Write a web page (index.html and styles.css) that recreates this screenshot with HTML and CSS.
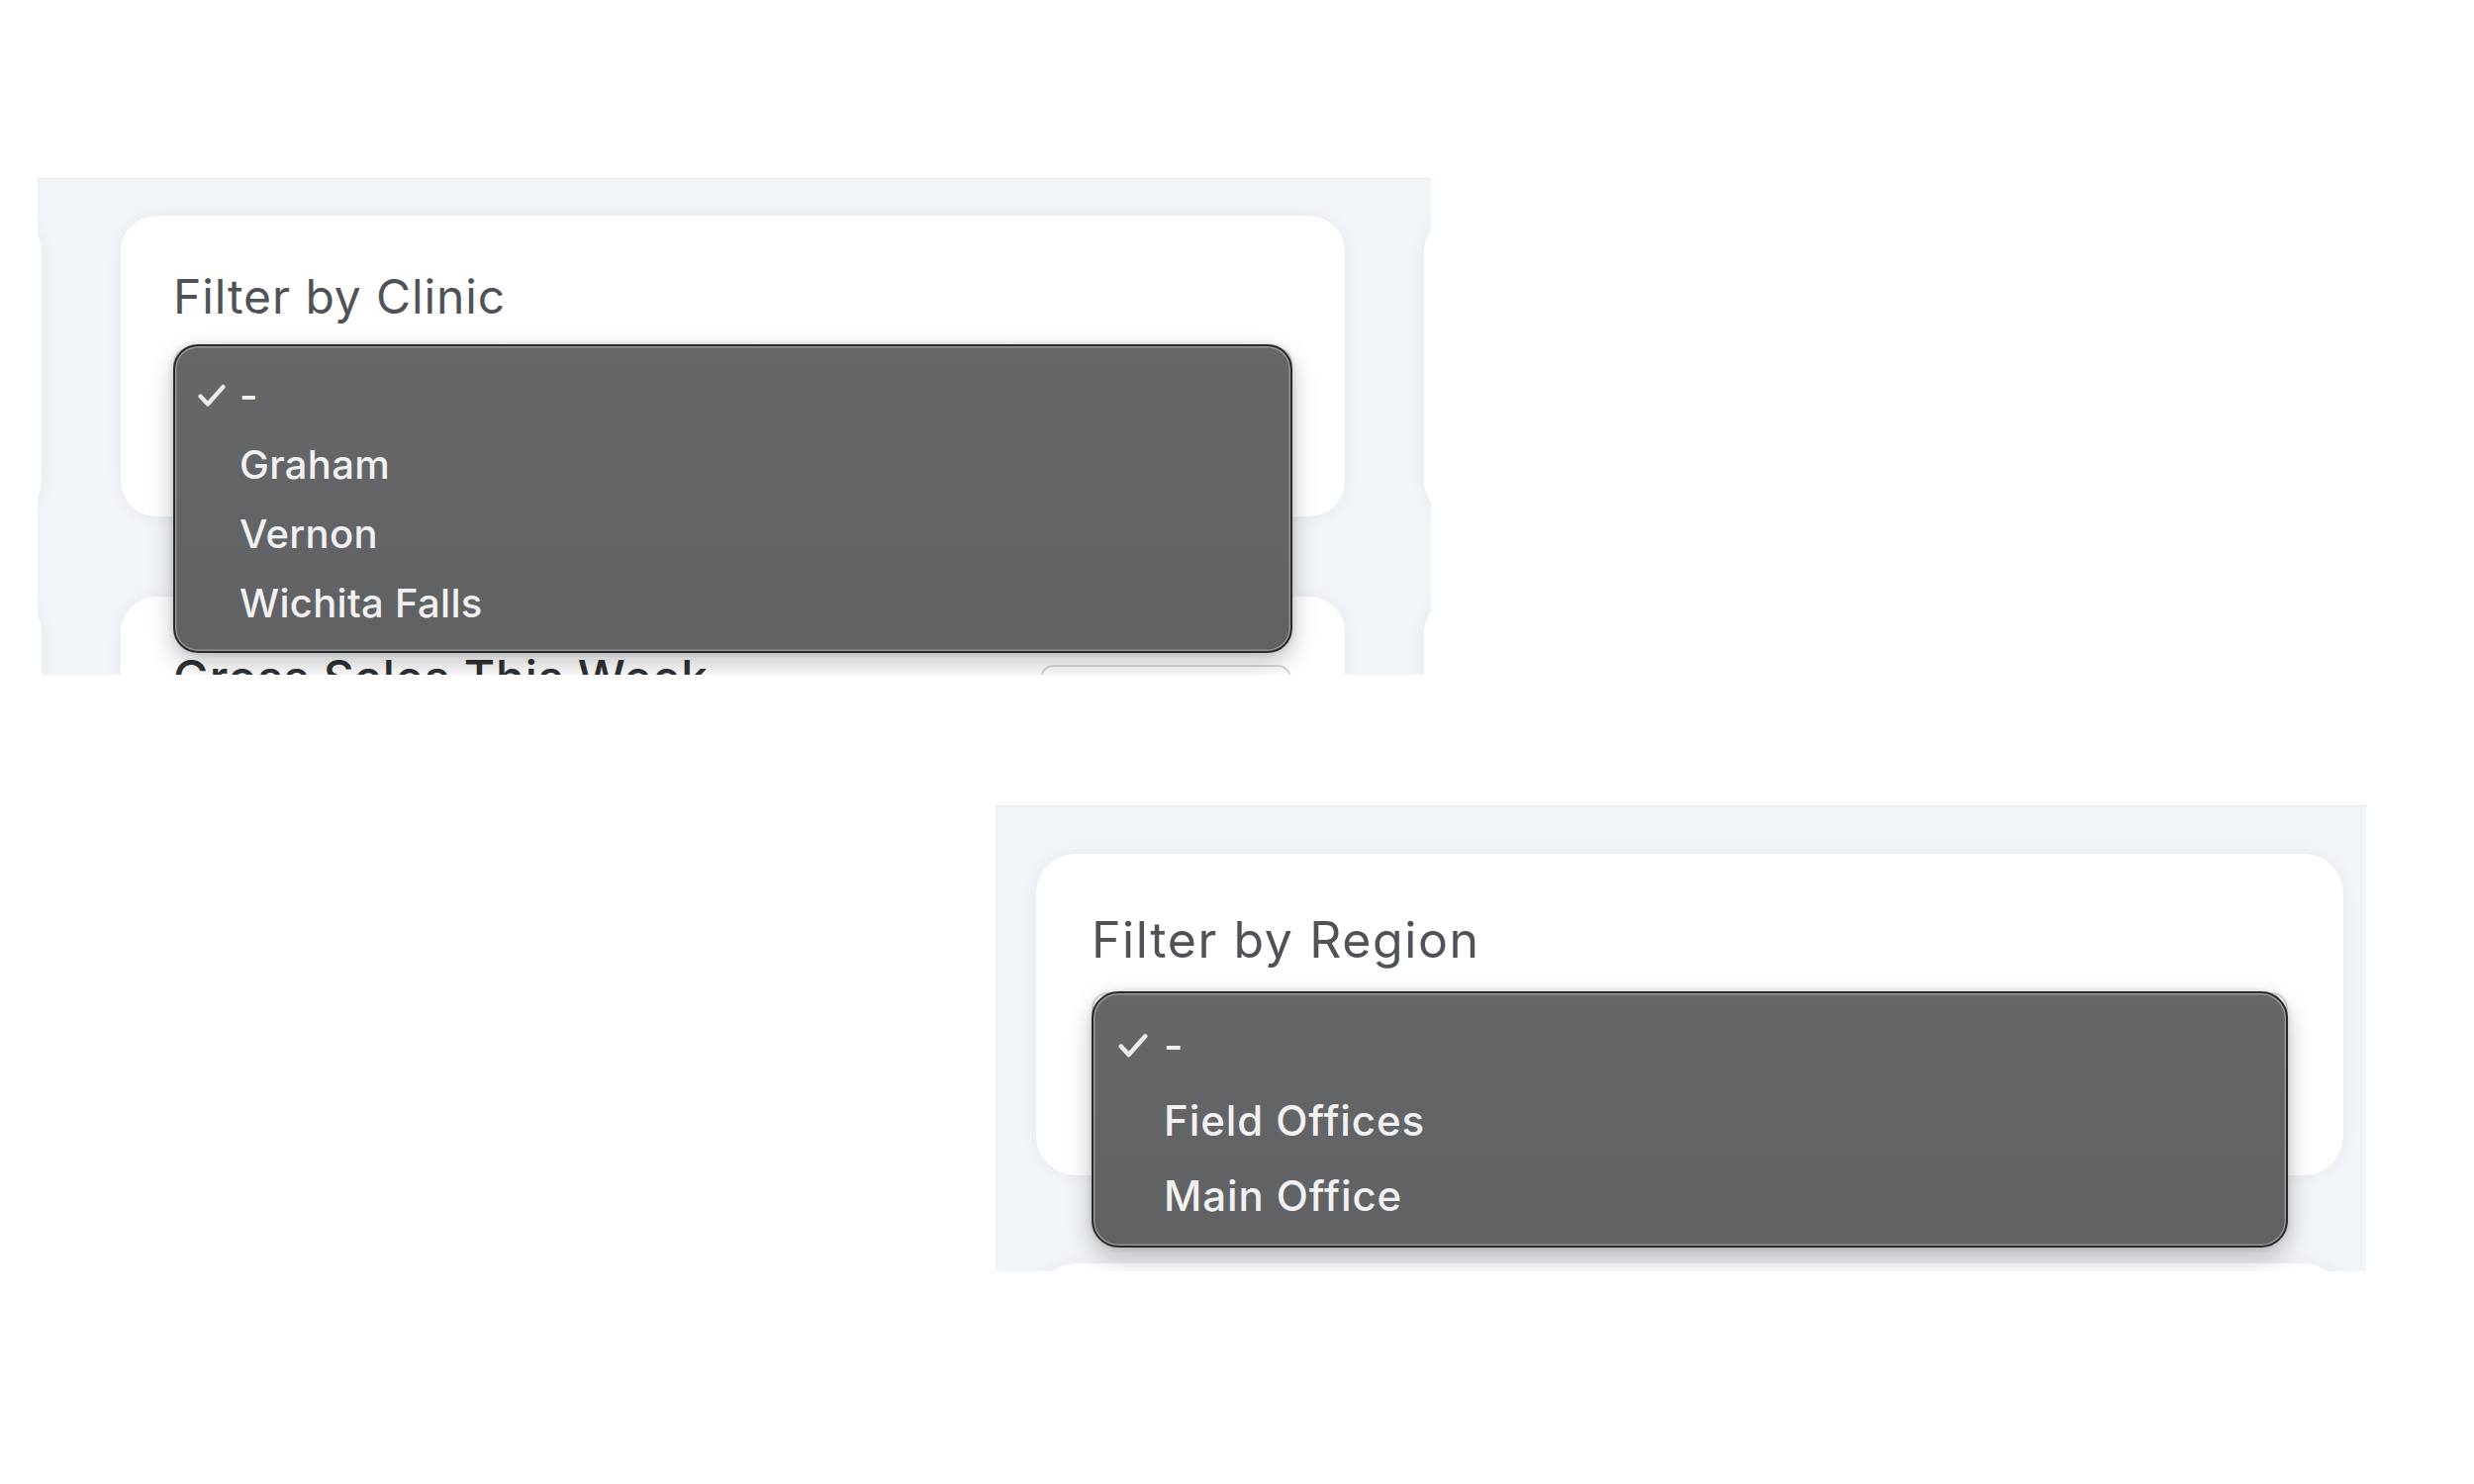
FILE: index.html
```html
<!DOCTYPE html>
<html lang="en">
<head>
<meta charset="utf-8">
<title>Filters</title>
<link rel="stylesheet" href="styles.css">
</head>
<body>
<div class="page">
  <section class="panel panel-clinic">
    <div class="track">
      <div class="col col-clinic">
        <div class="card ghost-card"></div>
        <div class="card ghost-card"></div>
      </div>
      <div class="col col-clinic">
        <div class="card filter-card clinic-card">
          <div class="label">Filter by Clinic</div>
          <div class="field clinic-field">
            <div class="select-box"></div>
            <ul class="menu clinic-menu">
              <li class="opt"><span class="check"><svg viewBox="0 0 28 24" width="28" height="24"><polyline points="2.5,12.5 10,20.5 25.5,3" /></svg></span><span class="opt-text">-</span></li>
              <li class="opt"><span class="check"></span><span class="opt-text">Graham</span></li>
              <li class="opt"><span class="check"></span><span class="opt-text">Vernon</span></li>
              <li class="opt"><span class="check"></span><span class="opt-text">Wichita Falls</span></li>
            </ul>
          </div>
        </div>
        <div class="card stat-card">
          <div class="stat-head">
            <div class="stat-title">Gross Sales This Week</div>
            <div class="stat-input"></div>
          </div>
        </div>
      </div>
      <div class="col col-clinic">
        <div class="card ghost-card"></div>
        <div class="card ghost-card"></div>
      </div>
    </div>
  </section>

  <section class="panel panel-region">
    <div class="col col-region">
      <div class="card filter-card region-card">
        <div class="label label-region">Filter by Region</div>
        <div class="field region-field">
          <div class="select-box"></div>
          <ul class="menu region-menu">
            <li class="opt"><span class="check"><svg viewBox="0 0 28 24" width="30" height="26"><polyline points="2.5,12.5 10,20.5 25.5,3" /></svg></span><span class="opt-text">-</span></li>
            <li class="opt"><span class="check"></span><span class="opt-text">Field Offices</span></li>
            <li class="opt"><span class="check"></span><span class="opt-text">Main Office</span></li>
          </ul>
        </div>
      </div>
      <div class="card ghost-card region-next"></div>
    </div>
  </section>
</div>
</body>
</html>
```

FILE: styles.css
```css
* { box-sizing: border-box; }

html, body {
  margin: 0;
  padding: 0;
  background: #ffffff;
}

body {
  font-family: Inter, "Noto Sans", "Liberation Sans", sans-serif;
  width: 2500px;
  height: 1500px;
  overflow: hidden;
}

.page {
  display: flex;
  flex-direction: column;
  align-items: flex-start;
}

.panel {
  background: #f1f4f8;
  overflow: hidden;
  box-shadow: inset 0 1px 0 #e3e6ea;
}

.panel-clinic {
  margin: 180px 0 0 38px;
  width: 1408px;
  height: 502px;
  padding: 38px 3px 0 0;
}

.panel-region {
  margin: 132px 0 0 1006px;
  width: 1385px;
  height: 471px;
  padding: 49px 0 0 41px;
}

.track {
  display: flex;
  justify-content: center;
  align-items: flex-start;
  gap: 80px;
}

.col {
  display: flex;
  flex-direction: column;
  flex-shrink: 0;
}

.col-clinic {
  width: 1237px;
  gap: 81px;
}

.col-region {
  width: 1321px;
  gap: 89px;
}

.card {
  background: #ffffff;
  border-radius: 36px;
  box-shadow: 0 0 18px rgba(30, 40, 60, 0.05);
}

.ghost-card {
  height: 304px;
}

.region-next {
  height: 200px;
  border-radius: 40px;
}

.clinic-card {
  padding: 53px 53px 71px 53px;
}

.region-card {
  border-radius: 40px;
  padding: 58px 56px 85px 56px;
}

.label {
  font-size: 48px;
  line-height: 58px;
  font-weight: 400;
  color: #4f5358;
  letter-spacing: 0.9px;
}

.label-region {
  font-size: 50px;
  letter-spacing: 1.6px;
}

.field {
  position: relative;
}

.clinic-field { margin-top: 22px; }
.region-field { margin-top: 24px; }

.select-box {
  height: 100px;
  border: 2px solid #d8dbe0;
  border-radius: 16px;
  background: #ffffff;
}

.menu {
  position: absolute;
  left: 0;
  right: 0;
  margin: 0;
  list-style: none;
  background: linear-gradient(180deg, #666769 0%, #636466 55%, #5f6163 100%);
  border: 2px solid #2a2b2d;
  box-shadow:
    inset 0 0 0 1.5px rgba(255, 255, 255, 0.32),
    0 10px 26px rgba(0, 0, 0, 0.24),
    0 0 6px rgba(0, 0, 0, 0.14);
  color: #f1f1f1;
  font-weight: 500;
}

.clinic-menu {
  top: -3px;
  height: 312px;
  border-radius: 25px;
  padding: 15px 0 13px 23px;
  font-size: 40px;
  letter-spacing: 0.3px;
}

.region-menu {
  top: -1px;
  height: 259px;
  border-radius: 27px;
  padding: 15px 0 12px 25px;
  font-size: 42px;
  letter-spacing: 0.9px;
}

.opt {
  display: flex;
  align-items: center;
}

.clinic-menu .opt { height: 70px; }
.region-menu .opt { height: 76px; }

.check {
  display: flex;
  align-items: center;
  flex-shrink: 0;
}

.clinic-menu .check { width: 42px; }
.region-menu .check { width: 46px; }

.check svg {
  fill: none;
  stroke: #ececec;
  stroke-width: 4.2;
  stroke-linecap: round;
  stroke-linejoin: round;
}

.opt-text {
  line-height: 1.2;
  white-space: nowrap;
}

.stat-card {
  height: 304px;
  padding: 53px 53px 0 53px;
}

.stat-head {
  display: flex;
  justify-content: space-between;
  align-items: flex-start;
}

.stat-title {
  font-size: 48px;
  line-height: 58px;
  font-weight: 500;
  color: #2f3134;
  letter-spacing: 0.8px;
}

.stat-input {
  width: 254px;
  height: 70px;
  margin-top: 16px;
  margin-right: 1px;
  border: 2px solid #d6d9dd;
  border-radius: 14px;
  background: #ffffff;
}
```
